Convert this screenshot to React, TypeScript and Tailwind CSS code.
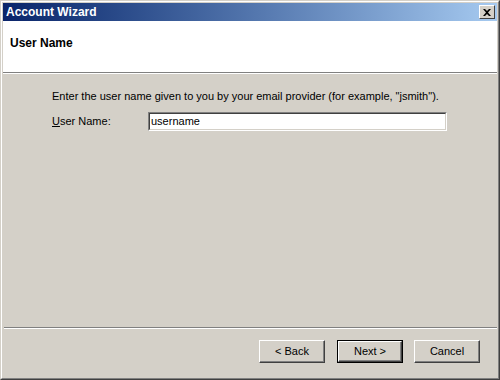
import React from "react";

const font = { fontFamily: '"Liberation Sans", Arial, sans-serif' };

const Btn = ({ children, isDefault }: { children: React.ReactNode; isDefault?: boolean }) =>
  isDefault ? (
    <div className="w-[66px] h-[23px] border border-black">
      <button className="w-full h-full flex items-center justify-center text-[11px] text-black bg-[#d4d0c8] border border-t-white border-l-white border-r-[#404040] border-b-[#404040] shadow-[inset_-1px_-1px_0_#808080]">
        {children}
      </button>
    </div>
  ) : (
    <button className="w-[66px] h-[23px] flex items-center justify-center text-[11px] text-black bg-[#d4d0c8] border border-t-white border-l-white border-r-[#404040] border-b-[#404040] shadow-[inset_-1px_-1px_0_#808080]">
      {children}
    </button>
  );

const App = () => {
  return (
    <div style={font} className="w-[500px] h-[380px] bg-[#d4d0c8] border border-t-[#d4d0c8] border-l-[#d4d0c8] border-r-[#404040] border-b-[#404040]">
      <div className="h-full border border-t-white border-l-white border-r-[#808080] border-b-[#808080] p-px flex flex-col">
        <div className="h-[18px] flex items-center justify-between pl-[3px] pr-[2px] bg-gradient-to-r from-[#0a246a] to-[#a6caf0]">
          <span className="text-white font-bold text-[12px] leading-none">Account Wizard</span>
          <div className="w-[16px] h-[14px] bg-[#d4d0c8] border border-t-white border-l-white border-r-[#404040] border-b-[#404040] flex items-center justify-center">
            <svg width="8" height="7" viewBox="0 0 8 7">
              <path d="M0 0h2l2 2 2-2h2L5 3.5 8 7H6L4 5 2 7H0l3-3.5z" fill="#000" />
            </svg>
          </div>
        </div>
        <div className="h-[52px] bg-white pl-[7px] pt-[13px] border-b border-b-[#808080]">
          <div className="font-bold text-[12px] text-black">User Name</div>
        </div>
        <div className="flex-1 border-t border-t-white flex flex-col">
          <div className="flex-1 pl-[49px] pt-[14px] text-[11px] text-black">
            <div>Enter the user name given to you by your email provider (for example, "jsmith").</div>
            <div className="flex items-center mt-[7px]">
              <span className="w-[96px]">
                <span className="underline">U</span>ser Name:
              </span>
              <div className="w-[299px] h-[19px] bg-white border border-t-[#808080] border-l-[#808080] border-r-white border-b-white">
                <div className="h-full border border-t-[#404040] border-l-[#404040] border-r-[#d4d0c8] border-b-[#d4d0c8] pl-[1px] flex items-center">
                  username
                </div>
              </div>
            </div>
          </div>
          <div className="border-t border-t-[#808080] ml-px">
            <div className="border-t border-t-white h-[49px] flex justify-end items-start gap-[11px] pr-[17px] pt-[11px]">
              <div className="mr-px">
                <Btn>&lt; Back</Btn>
              </div>
              <Btn isDefault>Next &gt;</Btn>
              <Btn>Cancel</Btn>
            </div>
          </div>
        </div>
      </div>
    </div>
  );
};

export default App;
